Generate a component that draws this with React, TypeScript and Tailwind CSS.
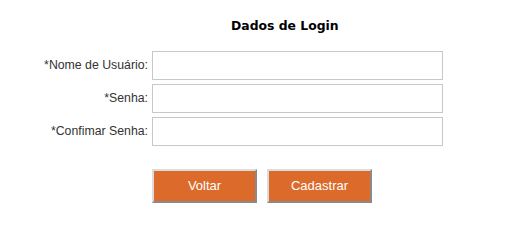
export default function App() {
  const rows = ["*Nome de Usuário:", "*Senha:", "*Confimar Senha:"];
  return (
    <div className="w-[517px] h-[223px] bg-white font-['Liberation_Sans',Arial,sans-serif] text-[13px] text-[#333333]">
      <div className="pt-[18px] pl-[231px]">
        <h1 className="font-['DejaVu_Sans',Verdana,sans-serif] font-bold text-[12.4px] leading-[15px] text-black">
          Dados de Login
        </h1>
      </div>
      <form className="mt-[18px] flex flex-col gap-[4px]">
        {rows.map((label) => (
          <div key={label} className="flex items-center">
            <label className="w-[152px] pr-[4px] text-right text-[12.3px]">{label}</label>
            <input
              type={label.includes("Senha") ? "password" : "text"}
              className="w-[291px] h-[29px] border border-[#c8c8c8] bg-white outline-none"
            />
          </div>
        ))}
        <div className="mt-[19px] pl-[152px] flex gap-[10px]">
          <button
            type="button"
            className="w-[105px] h-[34px] bg-[#dc6a2a] text-white border-2 border-t-[#dcdcdc] border-l-[#dcdcdc] border-b-[#8a8a8a] border-r-[#8a8a8a]"
          >
            Voltar
          </button>
          <button
            type="button"
            className="w-[105px] h-[34px] bg-[#dc6a2a] text-white border-2 border-t-[#dcdcdc] border-l-[#dcdcdc] border-b-[#8a8a8a] border-r-[#8a8a8a]"
          >
            Cadastrar
          </button>
        </div>
      </form>
    </div>
  );
}
